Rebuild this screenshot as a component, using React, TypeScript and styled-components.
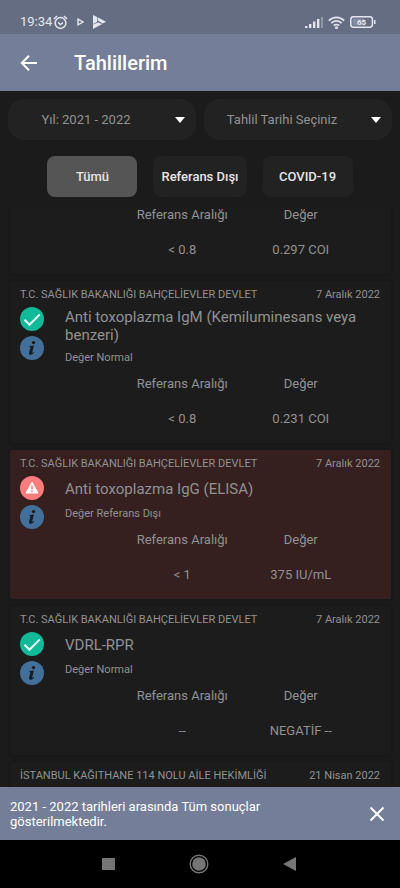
import React from "react";
import styled, { createGlobalStyle } from "styled-components";

const GlobalStyle = createGlobalStyle`
  *, *::before, *::after { box-sizing: border-box; }
  body {
    margin: 0;
    background: #1b1b1b;
    color: #929292;
    font-family: Roboto, "Noto Sans", sans-serif;
    font-size: 13px;
    line-height: 16px;
  }
  button, select { font: inherit; color: inherit; border: 0; margin: 0; cursor: pointer; }
  h1, h2, p, dl, dd { margin: 0; }
`;

const Screen = styled.div`
  display: flex;
  flex-direction: column;
  height: 100vh;
  overflow: hidden;
`;

const StatusBar = styled.div`
  display: flex;
  flex: none;
  align-items: center;
  justify-content: space-between;
  height: 34px;
  padding: 10px 24px 0 20px;
  background: #656d82;
  color: #e4e7f0;
`;

const StatusGroup = styled.div<{ $gap: number }>`
  display: flex;
  align-items: center;
  gap: ${(p) => p.$gap}px;
`;

const Clock = styled.time`
  font-size: 13px;
  margin-right: 1px;
`;

const AppBar = styled.header`
  display: flex;
  flex: none;
  align-items: center;
  gap: 37px;
  height: 57px;
  padding: 0 20px;
  background: #747e98;
  color: #fff;
`;

const IconButton = styled.button`
  display: flex;
  flex: none;
  padding: 0;
  background: none;
  color: #fff;
`;

const Title = styled.h1`
  font-size: 20px;
  font-weight: 500;
  line-height: 24px;
`;

const Filters = styled.div`
  display: grid;
  flex: none;
  grid-template-columns: 1fr 1fr;
  gap: 8px;
  padding: 8px 8px 16px;
`;

const SelectBox = styled.label`
  position: relative;
  display: block;
`;

const Select = styled.select`
  width: 100%;
  height: 41px;
  padding: 0 32px 0 0;
  border-radius: 16px;
  background: #222;
  appearance: none;
  text-align: center;
  text-align-last: center;
`;

const Caret = styled.svg`
  position: absolute;
  top: 18px;
  right: 11px;
  pointer-events: none;
`;

const Chips = styled.div`
  display: flex;
  flex: none;
  justify-content: center;
  gap: 16px;
  padding-bottom: 10px;
`;

const Chip = styled.button<{ $active?: boolean }>`
  min-width: 90px;
  height: 41px;
  padding: 0 8px;
  border-radius: 8px;
  background: ${(p) => (p.$active ? "#555" : "#222")};
  color: #e6e6e6;
  font-weight: 500;
`;

const List = styled.main`
  display: flex;
  flex: 1;
  flex-direction: column;
  gap: 7px;
  min-height: 0;
  padding: 0 9px 0 10px;
  overflow: hidden;
`;

const Card = styled.article<{ $alert?: boolean }>`
  flex: none;
  padding: 6px 11px 16px 10px;
  border-radius: 2px;
  background: ${(p) => (p.$alert ? "#351f1f" : "#1c1c1c")};
  box-shadow: 0 0 3px #141414;
`;

const CardHead = styled.div`
  display: flex;
  justify-content: space-between;
  font-size: 11px;
  line-height: 16px;
`;

const CardBody = styled.div`
  display: flex;
  gap: 21px;
  padding-top: 4px;
`;

const Marks = styled.div`
  display: flex;
  flex: none;
  flex-direction: column;
  gap: 5px;
`;

const Details = styled.div`
  flex: 1;
`;

const TestName = styled.h2`
  display: flex;
  align-items: center;
  min-height: 23px;
  margin-top: 1px;
  font-size: 15px;
  font-weight: 400;
  line-height: 18px;
`;

const Verdict = styled.p`
  margin: 6px 0 10px;
  font-size: 11px;
`;

const Metrics = styled.dl`
  display: grid;
  grid-template-columns: 1fr 1fr;
  padding: 0 20px 0 58px;
  text-align: center;
`;

const PartialCard = styled(Card)`
  padding-top: 0;
  padding-left: 55px;
`;

const MetricValue = styled.dd`
  padding-top: 19px;
`;

const Notice = styled.div`
  display: flex;
  flex: none;
  align-items: center;
  justify-content: space-between;
  gap: 40px;
  min-height: 53px;
  padding: 0 15px 0 10px;
  background: #747e98;
  color: #fff;
  line-height: 15px;
`;

const NavBar = styled.nav`
  display: flex;
  flex: none;
  align-items: center;
  justify-content: center;
  gap: 74px;
  height: 48px;
  padding-right: 3px;
  background: #000;
`;

const CheckMark = () => (
  <svg width="24" height="24" viewBox="0 0 24 24" role="img" aria-label="Normal">
    <circle cx="12" cy="12" r="12" fill="#10b998" />
    <path d="M4.5 12.8l5 5L19.8 7.4" fill="none" stroke="#e9fffa" strokeWidth="2" />
  </svg>
);

const AlertMark = () => (
  <svg width="24" height="24" viewBox="0 0 24 24" role="img" aria-label="Referans dışı">
    <circle cx="12" cy="12" r="12" fill="#fb7c7c" />
    <path d="M12 6.2l6 10.8H6z" fill="#fff" stroke="#fff" strokeWidth="1" strokeLinejoin="round" />
    <path d="M12 9.4v4M12 14.4v1.6" stroke="#fb7c7c" strokeWidth="1.5" />
  </svg>
);

const InfoMark = () => (
  <svg width="24" height="24" viewBox="0 0 24 24" aria-hidden="true">
    <circle cx="12" cy="12" r="12" fill="#43709a" />
    <circle cx="13.5" cy="6.6" r="1.7" fill="#191c20" />
    <path
      d="M9 10.2l5-.8-1.9 7c-.2.8.4.8 1.6-.6l.5.4c-1.4 2.1-2.7 2.7-3.9 2.5-1.2-.2-1.5-1.1-1.2-2.3l1.3-4.8c.1-.7-.3-.8-1.4-.8z"
      fill="#191c20"
    />
  </svg>
);

interface MetricProps {
  range: string;
  value: string;
}

const MetricTable = ({ range, value }: MetricProps) => (
  <Metrics>
    <div>
      <dt>Referans Aralığı</dt>
      <MetricValue>{range}</MetricValue>
    </div>
    <div>
      <dt>Değer</dt>
      <MetricValue>{value}</MetricValue>
    </div>
  </Metrics>
);

interface Result extends MetricProps {
  place: string;
  date: string;
  name: string;
  verdict: string;
  alert?: boolean;
}

const hospital = "T.C. SAĞLIK BAKANLIĞI BAHÇELİEVLER DEVLET";

const results: Result[] = [
  { place: hospital, date: "7 Aralık 2022", name: "Anti toxoplazma IgM (Kemiluminesans veya benzeri)", verdict: "Değer Normal", range: "< 0.8", value: "0.231 COI" },
  { place: hospital, date: "7 Aralık 2022", name: "Anti toxoplazma IgG (ELISA)", verdict: "Değer Referans Dışı", range: "< 1", value: "375 IU/mL", alert: true },
  { place: hospital, date: "7 Aralık 2022", name: "VDRL-RPR", verdict: "Değer Normal", range: "--", value: "NEGATİF --" },
];

const ResultCard = ({ result }: { result: Result }) => (
  <Card $alert={result.alert}>
    <CardHead>
      <span>{result.place}</span>
      <time>{result.date}</time>
    </CardHead>
    <CardBody>
      <Marks>
        {result.alert ? <AlertMark /> : <CheckMark />}
        <IconButton aria-label="Bilgi"><InfoMark /></IconButton>
      </Marks>
      <Details>
        <TestName>{result.name}</TestName>
        <Verdict>{result.verdict}</Verdict>
        <MetricTable range={result.range} value={result.value} />
      </Details>
    </CardBody>
  </Card>
);

const DownCaret = () => (
  <Caret width="10" height="6" viewBox="0 0 10 6" aria-hidden="true">
    <path d="M0 0h10L5 6z" fill="#fff" />
  </Caret>
);

export default function App() {
  return (
    <Screen lang="tr">
      <GlobalStyle />
      <StatusBar>
        <StatusGroup $gap={9}>
          <StatusGroup $gap={0}>
            <Clock>19:34</Clock>
            <svg width="15" height="15" viewBox="0 0 15 15" fill="none" stroke="currentColor" strokeWidth="1.5">
              <circle cx="7.5" cy="8" r="5.4" />
              <path d="M1 4l3-3M14 4l-3-3M5 7.5l2.5 2 2.5-2" />
            </svg>
          </StatusGroup>
          <svg width="7" height="8" viewBox="0 0 7 8" fill="none" stroke="currentColor" strokeWidth="1.4">
            <path d="M1 1.2L6 4 1 6.8z" />
          </svg>
          <svg width="13" height="14" viewBox="0 0 13 14">
            <path d="M0 0l4 2v5L0 9z M4.6 2.3L13 6.8 9.8 8.6 4.6 5.6z M0 9.6l5-2 4.2 1.3L0 14z" fill="currentColor" />
          </svg>
        </StatusGroup>
        <StatusGroup $gap={5}>
          <svg width="18" height="12" viewBox="0 0 18 12" fill="currentColor">
            <path d="M0 10h2.4v2H0zM4 8h2.4v4H4zM8 5.5h2.4V12H8zM12 3h2.4v9H12z" />
            <path d="M16 1h2v11h-2z" opacity=".35" />
          </svg>
          <svg width="17" height="13" viewBox="0 0 17 13" fill="none" stroke="currentColor" strokeWidth="1.7">
            <path d="M.8 4.6c4.3-4.4 11.1-4.4 15.4 0M3.3 7.2c2.9-3 7.5-3 10.4 0M5.8 9.7c1.5-1.6 3.9-1.6 5.4 0" />
            <circle cx="8.5" cy="11.8" r=".6" />
          </svg>
          <svg width="26" height="12" viewBox="0 0 26 12">
            <rect x=".8" y=".8" width="21.6" height="10.4" rx="2.6" fill="none" stroke="currentColor" strokeWidth="1.5" />
            <rect x="2.5" y="2.5" width="12" height="7" fill="#858c9f" />
            <path d="M24 4h1.5v4H24z" fill="currentColor" />
            <text x="11.6" y="9" fontSize="8" fontWeight="700" textAnchor="middle" fill="currentColor">65</text>
          </svg>
        </StatusGroup>
      </StatusBar>
      <AppBar>
        <IconButton aria-label="Geri">
          <svg width="17" height="16" viewBox="0 0 17 16" fill="none" stroke="currentColor" strokeWidth="2">
            <path d="M17 8H2M9 .8L1.8 8 9 15.2" />
          </svg>
        </IconButton>
        <Title>Tahlillerim</Title>
      </AppBar>
      <Filters>
        <SelectBox>
          <Select aria-label="Yıl">
            <option>Yıl: 2021 - 2022</option>
          </Select>
          <DownCaret />
        </SelectBox>
        <SelectBox>
          <Select aria-label="Tahlil tarihi">
            <option>Tahlil Tarihi Seçiniz</option>
          </Select>
          <DownCaret />
        </SelectBox>
      </Filters>
      <Chips>
        <Chip $active>Tümü</Chip>
        <Chip>Referans Dışı</Chip>
        <Chip>COVID-19</Chip>
      </Chips>
      <List>
        <PartialCard>
          <MetricTable range="< 0.8" value="0.297 COI" />
        </PartialCard>
        {results.map((result) => (
          <ResultCard key={result.name} result={result} />
        ))}
        <Card>
          <CardHead>
            <span>İSTANBUL KAĞITHANE 114 NOLU AİLE HEKİMLİĞİ</span>
            <time>21 Nisan 2022</time>
          </CardHead>
        </Card>
      </List>
      <Notice role="status">
        <p>2021 - 2022 tarihleri arasında Tüm sonuçlar gösterilmektedir.</p>
        <IconButton aria-label="Kapat">
          <svg width="16" height="16" viewBox="0 0 16 16" fill="none" stroke="currentColor" strokeWidth="2">
            <path d="M1.5 1.5l13 13M14.5 1.5l-13 13" />
          </svg>
        </IconButton>
      </Notice>
      <NavBar>
        <IconButton aria-label="Son uygulamalar">
          <svg width="13" height="12" viewBox="0 0 13 12"><path d="M0 0h13v12H0z" fill="#757575" /></svg>
        </IconButton>
        <IconButton aria-label="Ana ekran">
          <svg width="20" height="20" viewBox="0 0 20 20">
            <circle cx="10" cy="10" r="8.8" fill="none" stroke="#757575" strokeWidth="1.4" />
            <circle cx="10" cy="10" r="6.8" fill="#757575" />
          </svg>
        </IconButton>
        <IconButton aria-label="Geri dön">
          <svg width="13" height="14" viewBox="0 0 13 14"><path d="M13 0v14L0 7z" fill="#757575" /></svg>
        </IconButton>
      </NavBar>
    </Screen>
  );
}
